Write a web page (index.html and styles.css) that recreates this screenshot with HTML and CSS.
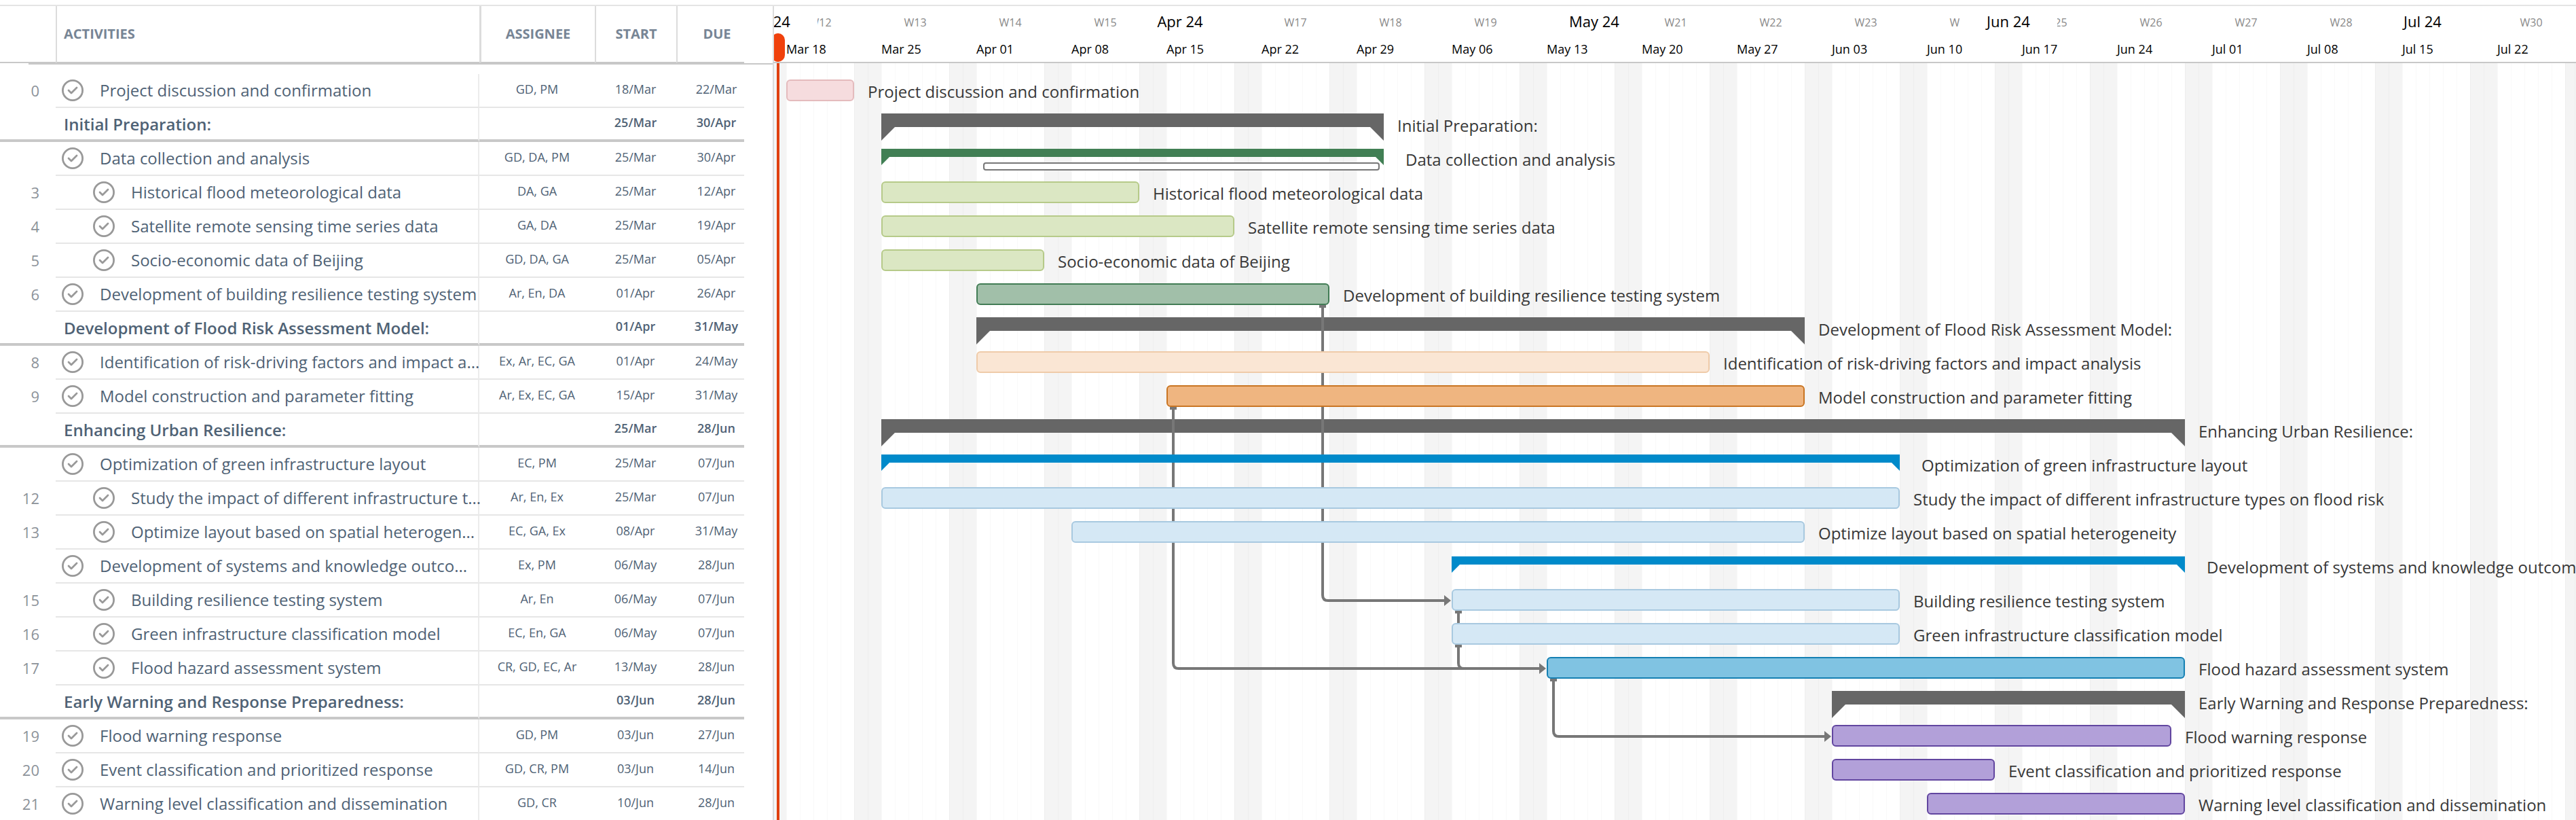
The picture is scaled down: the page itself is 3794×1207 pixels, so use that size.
FILE: index.html
```html
<!DOCTYPE html>
<html lang="en">
<head>
<meta charset="utf-8">
<title>Project plan</title>
<link rel="stylesheet" href="styles.css">
</head>
<body>
<svg class="defs" aria-hidden="true">
  <symbol id="check" viewBox="0 0 32 32">
    <circle cx="16" cy="16" r="14.6" fill="none" stroke="#999" stroke-width="2.8"/>
    <path d="M10 16 14 20 22 12" fill="none" stroke="#999" stroke-width="2.8" stroke-linecap="round" stroke-linejoin="round"/>
  </symbol>
</svg>
<main class="planner">
  <section class="tasks">
    <table>
      <colgroup><col class="c-num"><col class="c-name"><col class="c-who"><col class="c-start"><col class="c-due"></colgroup>
      <thead>
        <tr><th></th><th class="h-name">Activities</th><th class="h-who">Assignee</th><th class="h-date">Start</th><th class="due">Due</th></tr>
      </thead>
      <tbody>
        <tr><td class="num">0</td><td class="name"><div class="item"><button type="button" aria-label="Complete"><svg><use href="#check"/></svg></button><span>Project discussion and confirmation</span></div></td><td>GD, PM</td><td>18/Mar</td><td class="due">22/Mar</td></tr>
        <tr class="group"><td class="num"></td><td class="name">Initial Preparation:</td><td></td><td>25/Mar</td><td class="due">30/Apr</td></tr>
        <tr><td class="num"></td><td class="name"><div class="item"><button type="button" aria-label="Complete"><svg><use href="#check"/></svg></button><span>Data collection and analysis</span></div></td><td>GD, DA, PM</td><td>25/Mar</td><td class="due">30/Apr</td></tr>
        <tr><td class="num">3</td><td class="name"><div class="item sub"><button type="button" aria-label="Complete"><svg><use href="#check"/></svg></button><span>Historical flood meteorological data</span></div></td><td>DA, GA</td><td>25/Mar</td><td class="due">12/Apr</td></tr>
        <tr><td class="num">4</td><td class="name"><div class="item sub"><button type="button" aria-label="Complete"><svg><use href="#check"/></svg></button><span>Satellite remote sensing time series data</span></div></td><td>GA, DA</td><td>25/Mar</td><td class="due">19/Apr</td></tr>
        <tr><td class="num">5</td><td class="name"><div class="item sub"><button type="button" aria-label="Complete"><svg><use href="#check"/></svg></button><span>Socio-economic data of Beijing</span></div></td><td>GD, DA, GA</td><td>25/Mar</td><td class="due">05/Apr</td></tr>
        <tr><td class="num">6</td><td class="name"><div class="item"><button type="button" aria-label="Complete"><svg><use href="#check"/></svg></button><span>Development of building resilience testing system</span></div></td><td>Ar, En, DA</td><td>01/Apr</td><td class="due">26/Apr</td></tr>
        <tr class="group"><td class="num"></td><td class="name">Development of Flood Risk Assessment Model:</td><td></td><td>01/Apr</td><td class="due">31/May</td></tr>
        <tr><td class="num">8</td><td class="name"><div class="item"><button type="button" aria-label="Complete"><svg><use href="#check"/></svg></button><span>Identification of risk-driving factors and impact a...</span></div></td><td>Ex, Ar, EC, GA</td><td>01/Apr</td><td class="due">24/May</td></tr>
        <tr><td class="num">9</td><td class="name"><div class="item"><button type="button" aria-label="Complete"><svg><use href="#check"/></svg></button><span>Model construction and parameter fitting</span></div></td><td>Ar, Ex, EC, GA</td><td>15/Apr</td><td class="due">31/May</td></tr>
        <tr class="group"><td class="num"></td><td class="name">Enhancing Urban Resilience:</td><td></td><td>25/Mar</td><td class="due">28/Jun</td></tr>
        <tr><td class="num"></td><td class="name"><div class="item"><button type="button" aria-label="Complete"><svg><use href="#check"/></svg></button><span>Optimization of green infrastructure layout</span></div></td><td>EC, PM</td><td>25/Mar</td><td class="due">07/Jun</td></tr>
        <tr><td class="num">12</td><td class="name"><div class="item sub"><button type="button" aria-label="Complete"><svg><use href="#check"/></svg></button><span>Study the impact of different infrastructure t...</span></div></td><td>Ar, En, Ex</td><td>25/Mar</td><td class="due">07/Jun</td></tr>
        <tr><td class="num">13</td><td class="name"><div class="item sub"><button type="button" aria-label="Complete"><svg><use href="#check"/></svg></button><span>Optimize layout based on spatial heterogen...</span></div></td><td>EC, GA, Ex</td><td>08/Apr</td><td class="due">31/May</td></tr>
        <tr><td class="num"></td><td class="name"><div class="item"><button type="button" aria-label="Complete"><svg><use href="#check"/></svg></button><span>Development of systems and knowledge outco...</span></div></td><td>Ex, PM</td><td>06/May</td><td class="due">28/Jun</td></tr>
        <tr><td class="num">15</td><td class="name"><div class="item sub"><button type="button" aria-label="Complete"><svg><use href="#check"/></svg></button><span>Building resilience testing system</span></div></td><td>Ar, En</td><td>06/May</td><td class="due">07/Jun</td></tr>
        <tr><td class="num">16</td><td class="name"><div class="item sub"><button type="button" aria-label="Complete"><svg><use href="#check"/></svg></button><span>Green infrastructure classification model</span></div></td><td>EC, En, GA</td><td>06/May</td><td class="due">07/Jun</td></tr>
        <tr><td class="num">17</td><td class="name"><div class="item sub"><button type="button" aria-label="Complete"><svg><use href="#check"/></svg></button><span>Flood hazard assessment system</span></div></td><td>CR, GD, EC, Ar</td><td>13/May</td><td class="due">28/Jun</td></tr>
        <tr class="group"><td class="num"></td><td class="name">Early Warning and Response Preparedness:</td><td></td><td>03/Jun</td><td class="due">28/Jun</td></tr>
        <tr><td class="num">19</td><td class="name"><div class="item"><button type="button" aria-label="Complete"><svg><use href="#check"/></svg></button><span>Flood warning response</span></div></td><td>GD, PM</td><td>03/Jun</td><td class="due">27/Jun</td></tr>
        <tr><td class="num">20</td><td class="name"><div class="item"><button type="button" aria-label="Complete"><svg><use href="#check"/></svg></button><span>Event classification and prioritized response</span></div></td><td>GD, CR, PM</td><td>03/Jun</td><td class="due">14/Jun</td></tr>
        <tr><td class="num">21</td><td class="name"><div class="item"><button type="button" aria-label="Complete"><svg><use href="#check"/></svg></button><span>Warning level classification and dissemination</span></div></td><td>GD, CR</td><td>10/Jun</td><td class="due">28/Jun</td></tr>
      </tbody>
    </table>
  </section>

  <section class="chart">
    <header class="scale">
      <div class="weeks">
        <span>W12</span><span>W13</span><span>W14</span><span>W15</span><span></span><span>W17</span><span>W18</span><span>W19</span><span></span><span>W21</span><span>W22</span><span>W23</span><span>W24</span><span>W25</span><span>W26</span><span>W27</span><span>W28</span><span></span><span>W30</span>
      </div>
      <div class="months">
        <div style="--d:31"><span>Mar 24</span></div><div style="--d:30"><span>Apr 24</span></div><div style="--d:31"><span>May 24</span></div><div style="--d:30"><span>Jun 24</span></div><div style="--d:31"><span>Jul 24</span></div>
      </div>
      <div class="dates">
        <span>Mar 18</span><span>Mar 25</span><span>Apr 01</span><span>Apr 08</span><span>Apr 15</span><span>Apr 22</span><span>Apr 29</span><span>May 06</span><span>May 13</span><span>May 20</span><span>May 27</span><span>Jun 03</span><span>Jun 10</span><span>Jun 17</span><span>Jun 24</span><span>Jul 01</span><span>Jul 08</span><span>Jul 15</span><span>Jul 22</span>
      </div>
      <i class="today-pin"></i>
    </header>
    <div class="plot">
      <i class="today-line"></i>
      <div class="row" style="--s:0;--d:5"><i class="bar pink"></i><span>Project discussion and confirmation</span></div>
      <div class="row" style="--s:7;--d:37"><i class="span"></i><span>Initial Preparation:</span></div>
      <div class="row inner" style="--s:7;--d:37"><i class="span green"></i><i class="baseline"></i><span>Data collection and analysis</span></div>
      <div class="row" style="--s:7;--d:19"><i class="bar lime"></i><span>Historical flood meteorological data</span></div>
      <div class="row" style="--s:7;--d:26"><i class="bar lime"></i><span>Satellite remote sensing time series data</span></div>
      <div class="row" style="--s:7;--d:12"><i class="bar lime"></i><span>Socio-economic data of Beijing</span></div>
      <div class="row" style="--s:14;--d:26"><i class="bar sage"></i><span>Development of building resilience testing system</span></div>
      <div class="row" style="--s:14;--d:61"><i class="span"></i><span>Development of Flood Risk Assessment Model:</span></div>
      <div class="row" style="--s:14;--d:54"><i class="bar peach"></i><span>Identification of risk-driving factors and impact analysis</span></div>
      <div class="row" style="--s:28;--d:47"><i class="bar orange"></i><span>Model construction and parameter fitting</span></div>
      <div class="row" style="--s:7;--d:96"><i class="span"></i><span>Enhancing Urban Resilience:</span></div>
      <div class="row inner" style="--s:7;--d:75"><i class="span blue"></i><span>Optimization of green infrastructure layout</span></div>
      <div class="row" style="--s:7;--d:75"><i class="bar pale"></i><span>Study the impact of different infrastructure types on flood risk</span></div>
      <div class="row" style="--s:21;--d:54"><i class="bar pale"></i><span>Optimize layout based on spatial heterogeneity</span></div>
      <div class="row inner" style="--s:49;--d:54"><i class="span blue"></i><span>Development of systems and knowledge outcomes</span></div>
      <div class="row" style="--s:49;--d:33"><i class="bar pale"></i><span>Building resilience testing system</span></div>
      <div class="row" style="--s:49;--d:33"><i class="bar pale"></i><span>Green infrastructure classification model</span></div>
      <div class="row" style="--s:56;--d:47"><i class="bar sky"></i><span>Flood hazard assessment system</span></div>
      <div class="row" style="--s:77;--d:26"><i class="span"></i><span>Early Warning and Response Preparedness:</span></div>
      <div class="row" style="--s:77;--d:25"><i class="bar violet"></i><span>Flood warning response</span></div>
      <div class="row" style="--s:77;--d:12"><i class="bar violet"></i><span>Event classification and prioritized response</span></div>
      <div class="row" style="--s:84;--d:19"><i class="bar violet"></i><span>Warning level classification and dissemination</span></div>
      <!-- dependency arrows: 20 units per day across, 50 units per row down -->
      <svg class="links" width="2640" height="1100" aria-hidden="true">
        <g fill="none" stroke="#777" stroke-width="4">
          <path d="M790 340V767Q790 775 798 775H971"/>
          <path d="M570 490V867Q570 875 578 875H1111"/>
          <path d="M990 790V867Q990 875 998 875H1111"/>
          <path d="M1130 890V967Q1130 975 1138 975H1531"/>
        </g>
        <g fill="#777">
          <path d="M785 340h10v4h-10zM565 490h10v4h-10zM985 790h10v4h-10zM985 840h10v4h-10zM1125 890h10v4h-10z"/>
          <path d="M969 767 979 775 969 783zM1109 867 1119 875 1109 883zM1529 967 1539 975 1529 983z"/>
        </g>
      </svg>
    </div>
  </section>
</main>
</body>
</html>
```
FILE: styles.css
```css
:root {
  --day: 20px;
  --week: 140px;
}

* {
  box-sizing: border-box;
}

body {
  margin: 0;
  background: #fff;
  color: #4f6275;
  font-family: "Open Sans", "Noto Sans", sans-serif;
  font-size: 18px;
}

.defs {
  display: none;
}

.planner {
  display: flex;
  height: 100vh;
  padding-top: 7px;
  overflow: hidden;
}

/* Task table */

.tasks {
  flex: none;
  width: 1138px;
  border-top: 2px solid #e4e4e4;
}

table {
  width: 1096px;
  table-layout: fixed;
  border-collapse: separate;
  border-spacing: 0;
}

.c-num { width: 82px; }
.c-name { width: 624px; }
.c-who { width: 170px; }
.c-start { width: 120px; }
.c-due { width: 100px; }

thead {
  box-shadow: 42px 0 0 #fff, 42px 2px 0 #c8c8c8;
}

th {
  height: 84px;
  padding: 0 0 2px;
  border-bottom: 2px solid #c8c8c8;
  color: #778595;
  font-size: 20px;
  font-weight: 700;
  text-transform: uppercase;
}

.h-name {
  padding-left: 10px;
  border-left: 2px solid #dcdcdc;
  text-align: left;
}

.h-who {
  border-left: 3px solid #dcdcdc;
}

.h-date,
th.due {
  border-left: 2px solid #dcdcdc;
}

tbody::before {
  content: "";
  display: block;
  height: 16px;
}

td {
  height: 50px;
  padding: 0 0 4px;
  border-bottom: 2px solid #e6e6e6;
  text-align: center;
  white-space: nowrap;
}

.due {
  padding-left: 18px;
}

.num {
  padding: 0 24px 0 0;
  border-bottom-color: transparent;
  color: #8c9299;
  font-size: 22px;
  text-align: right;
}

.name {
  padding: 0 0 0 9px;
  border-right: 2px solid #ececec;
  font-size: 24px;
  text-align: left;
}

.group td {
  border-bottom: 4px solid #c8c8c8;
  font-weight: 600;
}

.group .name {
  padding-left: 12px;
}

.item {
  display: flex;
  align-items: center;
  gap: 24px;
}

.sub {
  padding-left: 46px;
}

.item span {
  padding-bottom: 1px;
  line-height: 31px;
}

.item button {
  flex: none;
  width: 32px;
  height: 32px;
  padding: 0;
  border: 0;
  background: none;
}

.item svg {
  display: block;
  width: 32px;
  height: 32px;
}

/* Timeline */

.chart {
  flex: 1;
  min-width: 0;
  overflow: hidden;
  border-top: 2px solid #e4e4e4;
}

.scale {
  position: relative;
  display: grid;
  grid-template-rows: 40px 42px;
  height: 84px;
  padding-left: var(--day);
  border-left: 2px solid #dcdcdc;
  border-bottom: 2px solid #c8c8c8;
  overflow: hidden;
}

.weeks,
.months {
  grid-area: 1 / 1;
  display: flex;
}

.weeks {
  margin-left: -22px;
  color: #8a8a8a;
  font-size: 16px;
  line-height: 48px;
}

.weeks span {
  flex: none;
  width: var(--week);
  text-align: center;
}

.months {
  margin-left: -342px;
  color: #000;
  font-size: 22px;
  line-height: 44px;
}

.months div {
  flex: none;
  width: calc(var(--d) * var(--day));
  text-align: center;
}

.months span {
  display: inline-block;
  padding: 0 40px;
  background: #fff;
}

.dates {
  grid-area: 2 / 1;
  display: flex;
  margin-left: -2px;
  color: #000;
  line-height: 46px;
}

.dates span {
  flex: none;
  width: var(--week);
}

.today-pin {
  position: absolute;
  top: 40px;
  left: -4px;
  width: 20px;
  height: 42px;
  border-radius: 10px;
  background: #f0410c;
}

.plot {
  position: relative;
  padding: 16px 0 0 20px;
  border-left: 2px solid #dcdcdc;
  background:
    repeating-linear-gradient(90deg, rgba(0, 0, 0, 0.025) 0 1px, transparent 1px 20px) -2px 0,
    repeating-linear-gradient(90deg, #f4f4f4 0 18px, #fff 18px 118px, #f4f4f4 118px 140px);
}

.today-line {
  position: absolute;
  top: 0;
  bottom: 0;
  left: 4px;
  width: 4px;
  background: #e0400f;
}

.row {
  display: flex;
  align-items: flex-start;
  height: 50px;
  padding-top: 8px;
  margin-left: calc(var(--s) * var(--day) - 2px);
  color: #383838;
  font-size: 24px;
  line-height: 35px;
  white-space: nowrap;
}

.row > span {
  position: relative;
  z-index: 4;
  margin-left: 20px;
}

.bar {
  flex: none;
  position: relative;
  z-index: 3;
  width: calc(var(--d) * var(--day));
  height: 32px;
  border: 2px solid;
  border-radius: 6px;
}

.pink { background: #f6dcde; border-color: #e4bbbd; }
.lime { background: #dbe7c3; border-color: #b6ca89; }
.sage { background: #a1bfa9; border-color: #427c55; }
.peach { background: #fae6d4; border-color: #efcba9; }
.orange { background: #efb580; border-color: #c97523; }
.pale { background: #d5e8f5; border-color: #a8c9e0; }
.sky { background: #80c3e2; border-color: #1580b3; }
.violet { background: #b2a0d9; border-color: #6246a0; }

/* Summary bar with a downward tooth at each end */
.span {
  flex: none;
  position: relative;
  z-index: 1;
  width: calc(var(--d) * var(--day));
  height: 40px;
  background: #666;
  clip-path: polygon(0 0, 100% 0, 100% 100%, calc(100% - 20px) 50%, 20px 50%, 0 100%);
}

.inner {
  position: relative;
}

.inner .span {
  z-index: 3;
  height: 24px;
  margin-top: 2px;
  clip-path: polygon(0 0, 100% 0, 100% 100%, calc(100% - 12px) 50%, 12px 50%, 0 100%);
}

.inner > span {
  margin-left: 32px;
}

.span.green { background: #417f54; }
.span.blue { background: #008aca; }

.baseline {
  position: absolute;
  z-index: 4;
  top: 30px;
  left: 150px;
  width: 584px;
  height: 12px;
  border: 2px solid #777;
  border-radius: 4px;
  background: #fff;
}

.links {
  position: absolute;
  z-index: 2;
  top: 16px;
  left: 18px;
}
```
